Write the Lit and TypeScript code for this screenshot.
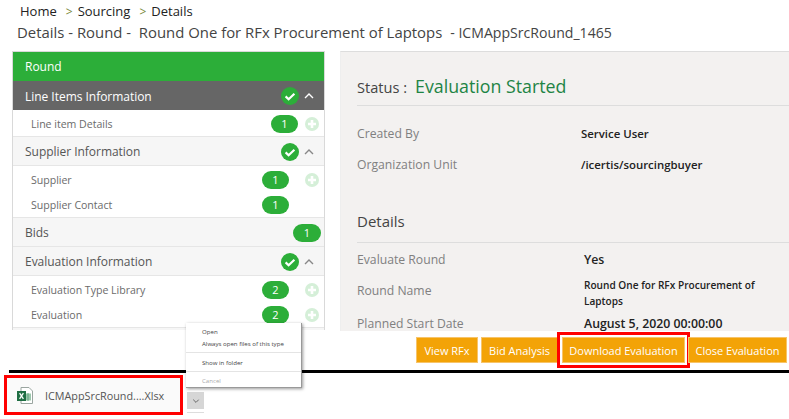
import { LitElement, html, css, svg } from 'lit';
import { customElement } from 'lit/decorators.js';

type Item = { name: string; count: number; add?: boolean };
type Group = { name: string; count?: number; check?: boolean; active?: boolean; items: Item[] };

const groups: Group[] = [
  {
    name: 'Line Items Information',
    check: true,
    active: true,
    items: [{ name: 'Line item Details', count: 1, add: true }],
  },
  {
    name: 'Supplier Information',
    check: true,
    items: [
      { name: 'Supplier', count: 1, add: true },
      { name: 'Supplier Contact', count: 1 },
    ],
  },
  { name: 'Bids', count: 1, items: [] },
  {
    name: 'Evaluation Information',
    check: true,
    items: [
      { name: 'Evaluation Type Library', count: 2, add: true },
      { name: 'Evaluation', count: 2, add: true },
    ],
  },
];

const checkIcon = svg`<svg width="18" height="18" viewBox="0 0 18 18">
  <circle cx="9" cy="9" r="9" fill="#2cae39"></circle>
  <path d="M4.6 9.4l3 2.8 5.8-5.4" fill="none" stroke="#fff" stroke-width="2.2"></path>
</svg>`;

const plusIcon = svg`<svg width="14" height="14" viewBox="0 0 14 14">
  <circle cx="7" cy="7" r="7" fill="#d5efd8"></circle>
  <path d="M7 3v8M3 7h8" stroke="#fff" stroke-width="2.6"></path>
</svg>`;

const chevron = svg`<svg width="10" height="6" viewBox="0 0 10 6">
  <path d="M1 5l4-4 4 4" fill="none" stroke="currentColor" stroke-width="1.4"></path>
</svg>`;

const excelIcon = svg`<svg width="16" height="17" viewBox="0 0 16 17">
  <path d="M4 .5h8l3.5 3.5v12.5H4z" fill="#fff" stroke="#9aa5a0"></path>
  <path d="M8 6h6v8H8z" fill="#cfe5d6"></path>
  <path d="M8 8h6M8 10h6M8 12h6M11 6v8" stroke="#4c9a6c" stroke-width=".8"></path>
  <path d="M0 4h9v10H0z" fill="#1f6e43"></path>
  <path d="M2.6 6.2l3.8 5.6M6.4 6.2l-3.8 5.6" stroke="#fff" stroke-width="1.3"></path>
</svg>`;

@customElement('app-root')
export class AppRoot extends LitElement {
  static styles = css`
    :host {
      display: block;
      position: relative;
      width: 789px;
      height: 419px;
      overflow: hidden;
      background: #fff;
      font-family: 'Open Sans', 'Noto Sans', sans-serif;
      color: #333;
    }

    .crumbs {
      display: flex;
      align-items: center;
      height: 22px;
      padding-left: 20px;
      font-size: 13px;
      color: #222;
    }

    .crumbs .sep {
      color: #7a8a3a;
      margin: 0 5px 0 9px;
      font-size: 12px;
    }

    .title {
      display: flex;
      align-items: center;
      height: 20px;
      padding-left: 17px;
      font-size: 14.9px;
      color: #444;
    }

    .title .code {
      font-size: 14.1px;
      margin-left: 8px;
    }

    .main {
      display: flex;
      height: 280px;
      margin-top: 9px;
      padding-left: 12px;
      overflow: hidden;
    }

    .side {
      flex: none;
      width: 313px;
      height: 279px;
      border: 1px solid #d9d9d9;
      border-bottom: none;
      box-sizing: border-box;
      font-size: 12px;
      letter-spacing: -0.03px;
      background: #f6f6f6;
    }

    .side .top {
      display: flex;
      align-items: center;
      height: 29px;
      padding-left: 12px;
      background: #2cae39;
      color: #fff;
    }

    .head {
      display: flex;
      align-items: center;
      height: 29px;
      padding: 1px 10px 0 12px;
      background: #f6f6f6;
      color: #555;
      border-bottom: 1px solid #e6e6e6;
      box-sizing: border-box;
    }

    .head.active {
      background: #666;
      color: #fff;
      border-bottom: none;
    }

    .head .name {
      flex: 1;
    }

    .head .chev {
      display: flex;
      margin-left: 5px;
      color: #888;
    }

    .head.active .chev {
      color: #fff;
    }

    .head .pill {
      margin-right: -7px;
    }

    .rows {
      padding: 1px 0 0;
      background: #fff;
      border-bottom: 1px solid #e6e6e6;
    }

    .row {
      display: flex;
      align-items: center;
      height: 25px;
      padding: 0 5px 0 18px;
      font-size: 10.6px;
      color: #6b6b6b;
    }

    .row .name {
      flex: 1;
    }

    .row .pill {
      width: 27px;
    }

    .slot {
      display: flex;
      justify-content: flex-end;
      width: 30px;
    }

    .head.active + .rows .slot {
      width: 21px;
    }

    .pill {
      display: flex;
      align-items: center;
      justify-content: center;
      width: 28px;
      height: 18px;
      border-radius: 9px;
      background: #2cae39;
      color: #fff;
      font-size: 11px;
    }

    .panel {
      flex: 1;
      margin-left: 15px;
      padding: 0 0 0 16px;
      background: #f3f1f0;
      border-top: 1px solid #ddd;
      border-left: 1px solid #eee;
      box-sizing: border-box;
    }

    .status {
      display: flex;
      align-items: baseline;
      gap: 8px;
      height: 54px;
      padding-top: 22px;
      box-sizing: border-box;
      border-bottom: 1px solid #ddd;
      font-size: 14.6px;
      color: #444;
    }

    .status b {
      font-weight: 400;
      font-size: 17.8px;
      color: #1e8445;
    }

    .field {
      display: grid;
      grid-template-columns: 224px 1fr;
      grid-template-rows: 31px;
      align-items: center;
      height: 31px;
      font-size: 12.2px;
      color: #808080;
    }

    .field span {
      color: #222;
      font-weight: 600;
      font-size: 11.4px;
    }

    .fields {
      padding-top: 12px;
    }

    h3 {
      margin: 31px 0 0;
      height: 31px;
      font-weight: 400;
      font-size: 15px;
      color: #444;
      border-bottom: 1px solid #ddd;
    }

    .fields.wide .field {
      grid-template-columns: 227px 1fr;
    }

    .fields.wide .field span {
      font-size: 12.3px;
    }

    .fields.wide {
      padding-top: 1px;
    }

    .fields.wide .field:last-child {
      margin-top: 2px;
    }

    .fields.wide .field span.small {
      font-size: 10.1px;
      line-height: 16px;
      width: 190px;
      margin-top: 5px;
    }

    .actions {
      display: flex;
      justify-content: flex-end;
      gap: 3px;
      height: 26px;
      margin-top: 6px;
      padding-right: 2px;
    }

    .actions button {
      height: 26px;
      padding: 0;
      border: 1px solid #f7c46a;
      background: #f3a307;
      color: #fff;
      font: 11px 'Open Sans', 'Noto Sans', sans-serif;
    }

    .actions .hl {
      margin-left: 1px;
      outline: 3px solid #f00;
      outline-offset: 2px;
    }

    .rule {
      height: 3px;
      margin: 7px 0 0 9px;
      background: #000;
    }

    .bar {
      display: flex;
      align-items: flex-start;
      padding: 2px 0 0 4px;
    }

    .chip {
      display: flex;
      align-items: center;
      width: 179px;
      height: 40px;
      box-sizing: border-box;
      border: 3px solid #f00;
      padding-left: 10px;
      font-size: 10.8px;
      color: #555;
      background: #fafafa;
    }

    .chip svg {
      margin-right: 12px;
    }

    .drop {
      display: flex;
      align-items: center;
      justify-content: center;
      width: 17px;
      height: 17px;
      margin: 17px 0 0 4px;
      background: #d6d6d6;
      color: #666;
      box-shadow: 0 3px 0 #fff, 0 4px 0 #ddd;
    }

    .drop svg {
      transform: rotate(180deg) scale(0.7);
    }

    .menu {
      position: absolute;
      left: 186px;
      top: 323px;
      width: 116px;
      height: 65px;
      box-sizing: border-box;
      background: #fff;
      border-right: 1px solid #999;
      border-bottom: 1px solid #999;
      box-shadow: 1px 1px 3px rgba(0, 0, 0, 0.4);
      padding: 2px 0 0 16px;
      font-size: 6.1px;
      color: #444;
    }

    .menu div {
      display: flex;
      align-items: center;
      height: 12.5px;
    }

    .menu hr {
      margin: 2px 0 3px -16px;
      border: none;
      border-top: 1px solid #e4e4e4;
    }

    .menu .off {
      color: #aaa;
    }
  `;

  renderGroup(g: Group) {
    return html`
      <div class="head ${g.active ? 'active' : ''}">
        <div class="name">${g.name}</div>
        ${g.check ? checkIcon : ''}
        ${g.check ? html`<div class="chev">${chevron}</div>` : ''}
        ${g.count ? html`<div class="pill">${g.count}</div>` : ''}
      </div>
      ${g.items.length
        ? html`<div class="rows">
            ${g.items.map(
              item => html`<div class="row">
                <div class="name">${item.name}</div>
                <div class="pill">${item.count}</div>
                <div class="slot">${item.add ? plusIcon : ''}</div>
              </div>`,
            )}
          </div>`
        : ''}
    `;
  }

  render() {
    return html`
      <div class="crumbs">
        Home<span class="sep">&gt;</span>Sourcing<span class="sep">&gt;</span>Details
      </div>
      <div class="title">
        <span>Details - Round - &nbsp;Round One for RFx Procurement of Laptops</span>
        <span class="code">- ICMAppSrcRound_1465</span>
      </div>
      <div class="main">
        <div class="side">
          <div class="top">Round</div>
          ${groups.map(g => this.renderGroup(g))}
        </div>
        <div class="panel">
          <div class="status">Status : <b>Evaluation Started</b></div>
          <div class="fields">
            <div class="field">Created By<span>Service User</span></div>
            <div class="field">Organization Unit<span>/icertis/sourcingbuyer</span></div>
          </div>
          <h3>Details</h3>
          <div class="fields wide">
            <div class="field">Evaluate Round<span>Yes</span></div>
            <div class="field">
              Round Name<span class="small">Round One for RFx Procurement of Laptops</span>
            </div>
            <div class="field">Planned Start Date<span>August 5, 2020 00:00:00</span></div>
          </div>
        </div>
      </div>
      <div class="actions">
        <button style="width:62px">View RFx</button>
        <button style="width:77px">Bid Analysis</button>
        <button class="hl" style="width:123px">Download Evaluation</button>
        <button style="width:99px">Close Evaluation</button>
      </div>
      <div class="rule"></div>
      <div class="bar">
        <div class="chip">${excelIcon}ICMAppSrcRound....Xlsx</div>
        <div class="drop">${chevron}</div>
      </div>
      <div class="menu">
        <div>Open</div>
        <div>Always open files of this type</div>
        <hr />
        <div>Show in folder</div>
        <hr />
        <div class="off">Cancel</div>
      </div>
    `;
  }
}
